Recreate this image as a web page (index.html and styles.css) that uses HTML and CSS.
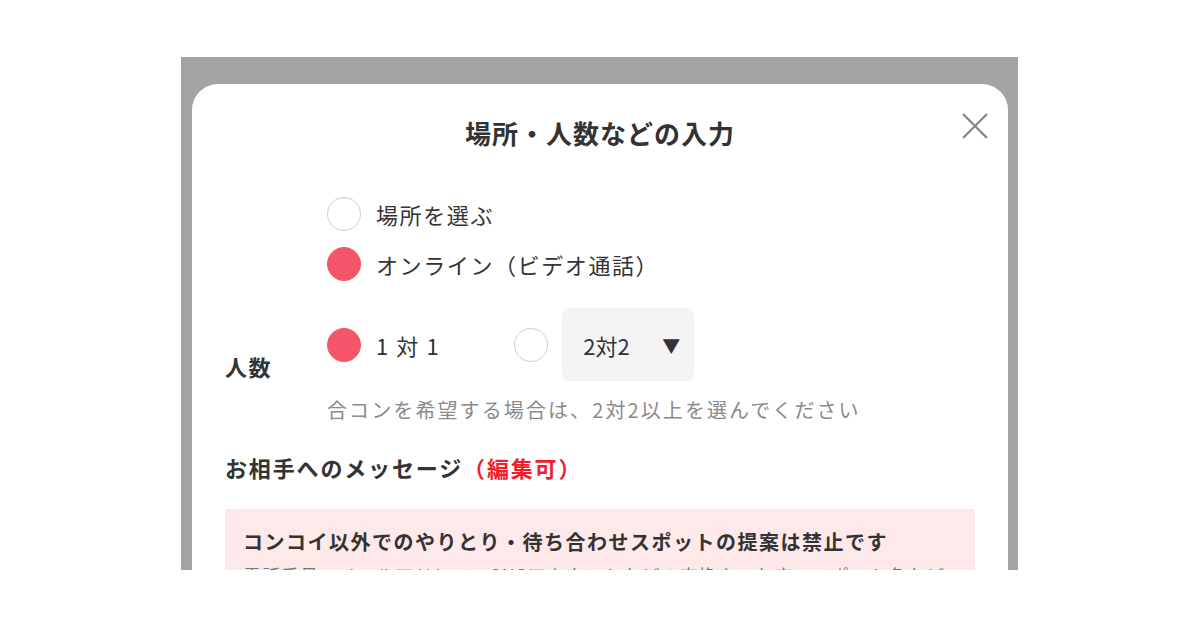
FILE: index.html
```html
<!DOCTYPE html>
<html lang="ja">
<head>
    <meta charset="UTF-8">
    <meta name="viewport" content="width=device-width, initial-scale=1.0">
    <title>場所・人数などの入力</title>
    <link rel="stylesheet" href="styles.css">
</head>
<body>
    <div class="overlay">
        <div class="modal">
            <div class="modal-header">
                <h1>場所・人数などの入力</h1>
                <button class="close-btn" aria-label="閉じる">
                    <svg width="28" height="28" viewBox="0 0 28 28">
                        <path d="M2 2 L26 26 M26 2 L2 26" stroke="#8a8a8a" stroke-width="2.4" fill="none"/>
                    </svg>
                </button>
            </div>

            <div class="place-options">
                <label class="radio-row">
                    <span class="radio"></span>
                    <span>場所を選ぶ</span>
                </label>
                <label class="radio-row">
                    <span class="radio checked"></span>
                    <span>オンライン（ビデオ通話）</span>
                </label>
            </div>

            <div class="field-row">
                <div class="field-label">人数</div>
                <div class="field-body">
                    <div class="count-options">
                        <label class="radio-row">
                            <span class="radio checked"></span>
                            <span>1 対 1</span>
                        </label>
                        <label class="radio-row group">
                            <span class="radio"></span>
                            <span class="select-box">2対2 <span class="arrow">▼</span></span>
                        </label>
                    </div>
                    <p class="hint">合コンを希望する場合は、2対2以上を選んでください</p>
                </div>
            </div>

            <h2 class="message-title">お相手へのメッセージ<span class="editable">（編集可）</span></h2>

            <div class="notice">
                <p class="notice-title">コンコイ以外でのやりとり・待ち合わせスポットの提案は禁止です</p>
                <p class="notice-text">電話番号・メールアドレス・SNSアカウントなどの交換や、お店・スポット名などは</p>
            </div>
        </div>
    </div>
</body>
</html>
```

FILE: styles.css
```css
/* Base */
body {
    margin: 0;
    background: #fff;
    font-family: "Noto Sans CJK JP", "Noto Sans", sans-serif;
    color: #333;
}

.overlay {
    margin: 57px 0 0 181px;
    width: 837px;
    height: 513px;
    background: #a3a3a3;
    overflow: hidden;
    padding: 27px 10px 0 11px;
    box-sizing: border-box;
}

.modal {
    background: #fff;
    border-radius: 26px 26px 0 0;
    min-height: 600px;
    padding: 0 33px;
}

/* Header */
.modal-header {
    position: relative;
    height: 96px;
    display: flex;
    align-items: center;
    justify-content: center;
}
.modal-header h1 {
    margin: 0;
    font-size: 26px;
    letter-spacing: 1px;
    font-weight: bold;
}
.close-btn {
    position: absolute;
    right: -14px;
    top: 28px;
    border: none;
    background: none;
    padding: 0;
    cursor: pointer;
}

/* Radios */
.place-options {
    padding-left: 102px;
    padding-top: 17px;
    display: flex;
    flex-direction: column;
    gap: 16px;
}
.radio-row {
    display: flex;
    align-items: center;
    gap: 15px;
    font-size: 22px;
    letter-spacing: 1.6px;
    line-height: 32px;
    cursor: pointer;
}
.radio {
    width: 34px;
    height: 34px;
    border-radius: 50%;
    border: 1.5px solid #cfcfcf;
    box-sizing: border-box;
    flex-shrink: 0;
}
.radio.checked {
    background: #f5566c;
    border-color: #f5566c;
}

/* 人数 */
.field-row {
    display: flex;
    align-items: center;
    margin-top: 27px;
}
.field-label {
    width: 102px;
    font-size: 22px;
    font-weight: bold;
    letter-spacing: 1.6px;
}
.count-options {
    display: flex;
    align-items: center;
    gap: 74px;
}
.group {
    gap: 14px;
}
.select-box {
    display: inline-flex;
    align-items: center;
    justify-content: space-between;
    box-sizing: border-box;
    width: 132px;
    height: 73px;
    padding: 0 14px 0 21px;
    background: #f4f4f4;
    border-radius: 8px;
    letter-spacing: 0;
}
.arrow {
    font-size: 18px;
    color: #333;
}
.hint {
    margin: 14px 0 0;
    font-size: 20px;
    line-height: 29px;
    letter-spacing: 2.1px;
    color: #8a8a8a;
}

/* Message */
.message-title {
    margin: 27px 0 0;
    font-size: 22px;
    line-height: 32px;
    letter-spacing: 1.85px;
    font-weight: bold;
}
.editable {
    color: #f01e2c;
}

.notice {
    margin-top: 26px;
    background: #fde9e9;
    padding: 18px 18px;
}
.notice-title {
    margin: 0;
    font-size: 20px;
    line-height: 29px;
    font-weight: bold;
    letter-spacing: 1.5px;
}
.notice-text {
    margin: 6px 0 0;
    font-size: 18px;
    line-height: 26px;
    letter-spacing: 1px;
    color: #777;
}
```
